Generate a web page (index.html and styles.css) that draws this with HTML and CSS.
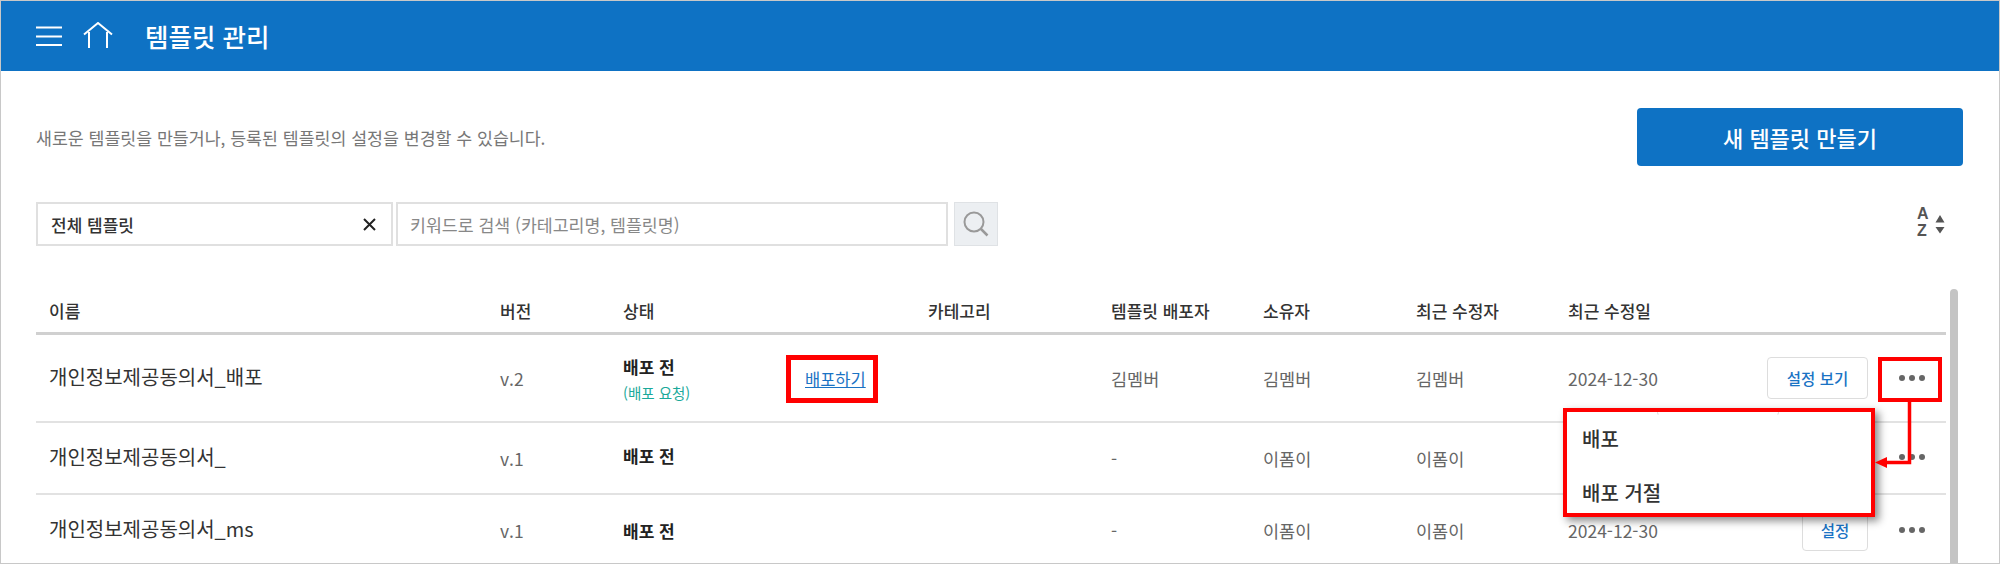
FILE: index.html
```html
<!DOCTYPE html>
<html lang="ko">
<head>
    <meta charset="UTF-8">
    <title>템플릿 관리</title>
    <link rel="stylesheet" href="styles.css">
</head>
<body>
    <div class="page">
        <header class="topbar">
            <svg class="icon-menu" width="26" height="20" viewBox="0 0 26 20">
                <path d="M0 1.500H26M0 10.500H26M0 19H26" fill="none" stroke="#fff" stroke-width="2"/>
            </svg>
            <svg class="icon-home" width="30" height="26" viewBox="0 0 30 26">
                <path d="M1 12.500L15 1L29 12.500M6 10V26M24 10V26" fill="none" stroke="#fff" stroke-width="2"/>
            </svg>
            <h1>템플릿 관리</h1>
        </header>

        <div class="content">
            <div class="intro">
                <p>새로운 템플릿을 만들거나, 등록된 템플릿의 설정을 변경할 수 있습니다.</p>
                <button class="btn-new" type="button">새 템플릿 만들기</button>
            </div>

            <div class="filters">
                <div class="select">
                    <span>전체 템플릿</span>
                    <svg width="13" height="13" viewBox="0 0 13 13">
                        <path d="M1 1L12 12M12 1L1 12" fill="none" stroke="#222" stroke-width="2"/>
                    </svg>
                </div>
                <div class="search">키워드로 검색 (카테고리명, 템플릿명)</div>
                <button class="btn-search" type="button">
                    <svg width="26" height="26" viewBox="0 0 26 26">
                        <circle cx="11" cy="11" r="9.500" fill="none" stroke="#999" stroke-width="2"/>
                        <path d="M18 18L24.500 24.500" fill="none" stroke="#999" stroke-width="2.500"/>
                    </svg>
                </button>
                <div class="sort">
                    <div class="sort-letters"><span>A</span><span>Z</span></div>
                    <svg width="10" height="19" viewBox="0 0 10 19">
                        <path d="M5 0L9.500 7.500H0.500ZM0.500 12H9.500L5 18.500Z" fill="#555"/>
                    </svg>
                </div>
            </div>

            <div class="list">
                <div class="table">
                    <div class="row row-head">
                        <div>이름</div>
                        <div>버전</div>
                        <div>상태</div>
                        <div></div>
                        <div>카테고리</div>
                        <div>템플릿 배포자</div>
                        <div>소유자</div>
                        <div>최근 수정자</div>
                        <div>최근 수정일</div>
                        <div></div>
                    </div>

                    <div class="row row-1">
                        <div class="name">개인정보제공동의서_배포</div>
                        <div class="cell">v.2</div>
                        <div class="status"><strong>배포 전</strong><span>(배포 요청)</span></div>
                        <div><a class="deploy" href="#">배포하기</a></div>
                        <div></div>
                        <div class="cell">김멤버</div>
                        <div class="cell">김멤버</div>
                        <div class="cell">김멤버</div>
                        <div class="cell">2024-12-30</div>
                        <div class="actions">
                            <button class="btn-line" type="button">설정 보기</button>
                            <span class="dots"><i></i><i></i><i></i></span>
                        </div>
                    </div>

                    <div class="row row-2">
                        <div class="name">개인정보제공동의서_</div>
                        <div class="cell">v.1</div>
                        <div class="status"><strong>배포 전</strong></div>
                        <div></div>
                        <div></div>
                        <div class="cell dash">-</div>
                        <div class="cell">이폼이</div>
                        <div class="cell">이폼이</div>
                        <div class="cell"></div>
                        <div class="actions">
                            <span class="dots"><i></i><i></i><i></i></span>
                        </div>
                    </div>

                    <div class="row row-3">
                        <div class="name">개인정보제공동의서_ms</div>
                        <div class="cell">v.1</div>
                        <div class="status"><strong>배포 전</strong></div>
                        <div></div>
                        <div></div>
                        <div class="cell dash">-</div>
                        <div class="cell">이폼이</div>
                        <div class="cell">이폼이</div>
                        <div class="cell">2024-12-30</div>
                        <div class="actions">
                            <button class="btn-line btn-short" type="button">설정</button>
                            <span class="dots"><i></i><i></i><i></i></span>
                        </div>
                    </div>
                </div>
                <div class="scrollbar"></div>
            </div>
        </div>

        <!-- annotations over the screenshot -->
        <div class="mark mark-deploy"></div>
        <div class="mark mark-dots"></div>
        <div class="menu">
            <div>배포</div>
            <div>배포 거절</div>
        </div>
        <svg class="arrow" width="40" height="68" viewBox="0 0 40 68">
            <path d="M34.500 0V60.500H8" fill="none" stroke="#f00" stroke-width="3.500"/>
            <path d="M0 60.500L12 55V66Z" fill="#f00"/>
        </svg>
    </div>
</body>
</html>
```

FILE: styles.css
```css
* {
    box-sizing: border-box;
}
html, body {
    margin: 0;
    height: 100%;
    overflow: hidden;
}
body {
    font-family: "Noto Sans CJK KR", "Noto Sans", sans-serif;
    color: #333;
    background: #fff;
}
.page {
    position: relative;
    height: 564px;
    border: 1px solid #c8c8c8;
    overflow: hidden;
}

.topbar {
    display: flex;
    align-items: center;
    height: 70px;
    padding-left: 35px;
    background-color: #0e72c4;
    color: #fff;
}
.icon-menu {
    margin-right: 21px;
}
.icon-home {
    margin-top: -2px;
    margin-right: 32px;
}
.topbar h1 {
    margin: 0;
    font-size: 25.500px;
    font-weight: 500;
    line-height: 1;
}

.content {
    padding-left: 35px;
}
.intro {
    display: flex;
    align-items: center;
    justify-content: space-between;
    height: 58px;
    margin-top: 37px;
    padding-right: 36px;
}
.intro p {
    margin: 0;
    font-size: 17.300px;
    color: #777;
}
.btn-new {
    width: 326px;
    height: 58px;
    border: none;
    border-radius: 4px;
    background-color: #0e72c4;
    color: #fff;
    font-family: inherit;
    font-size: 22px;
    font-weight: 500;
}

.filters {
    display: flex;
    margin-top: 36px;
    height: 44px;
}
.select {
    display: flex;
    align-items: center;
    justify-content: space-between;
    width: 357px;
    padding: 0 15px 0 13px;
    border: 2px solid #e0e0e0;
    font-size: 17px;
    font-weight: 500;
    color: #333;
}
.search {
    display: flex;
    align-items: center;
    width: 552px;
    margin-left: 3px;
    padding-left: 12px;
    border: 2px solid #e0e0e0;
    font-size: 17.300px;
    color: #888;
}
.btn-search {
    display: flex;
    align-items: center;
    justify-content: center;
    width: 44px;
    margin-left: 6px;
    padding: 0;
    border: 1px solid #dfe2e5;
    background-color: #eceff2;
}
.sort {
    display: flex;
    align-items: center;
    gap: 6px;
    margin-left: 919px;
}
.sort-letters {
    display: flex;
    flex-direction: column;
    margin-top: -4px;
    font-family: "Liberation Sans", sans-serif;
    font-size: 16px;
    font-weight: 700;
    line-height: 17px;
    color: #555;
}

.list {
    display: flex;
    margin-top: 43px;
}
.table {
    width: 1910px;
}
.row {
    display: grid;
    grid-template-columns: 451px 123px 182px 123px 183px 152px 153px 152px 150px 1fr;
    align-items: center;
    padding-left: 13px;
    border-bottom: 2px solid #e2e2e2;
    font-size: 17px;
}
.row-head {
    height: 46px;
    border-bottom: 3px solid #d0d0d0;
    font-weight: 500;
    color: #333;
}
.row-1 {
    height: 88px;
}
.row-2 {
    height: 72px;
}
.row-3 {
    height: 70px;
    border-bottom: none;
}
.name {
    margin-bottom: 4px;
    font-size: 20px;
    color: #333;
}
.cell {
    font-size: 17.500px;
    color: #666;
}
.status {
    display: flex;
    flex-direction: column;
    gap: 3px;
}
.row-2 .status {
    margin-bottom: 6px;
}
.status strong {
    font-size: 17px;
    font-weight: 700;
    color: #222;
}
.status span {
    font-size: 14.500px;
    color: #1aa99a;
}
.deploy {
    font-size: 16.500px;
    color: #1a73c4;
}
.actions {
    display: flex;
    align-items: center;
    justify-content: flex-end;
}
.btn-line {
    width: 101px;
    height: 42px;
    border: 1px solid #ddd;
    border-radius: 4px;
    background: #fff;
    color: #1a73c4;
    font-family: inherit;
    font-size: 15.500px;
    font-weight: 500;
}
.btn-short {
    width: 66px;
}
.dots {
    display: flex;
    justify-content: center;
    gap: 4px;
    width: 78px;
    padding-left: 10px;
}
.dots i {
    width: 6px;
    height: 6px;
    border-radius: 50%;
    background-color: #666;
}
.row-2 .dots {
    margin-bottom: 2px;
}
.scrollbar {
    width: 8px;
    margin-left: 4px;
    background-color: #c4c4c4;
    border-radius: 4px 4px 0 0;
}

.mark {
    position: absolute;
    border: 5px solid #f00;
}
.mark-deploy {
    left: 785px;
    top: 354px;
    width: 92px;
    height: 48px;
}
.mark-dots {
    left: 1877px;
    top: 356px;
    width: 64px;
    height: 45px;
    border-width: 4px;
}
.menu {
    position: absolute;
    left: 1562px;
    top: 407px;
    width: 312px;
    height: 109px;
    padding-left: 15px;
    border: 4px solid #f00;
    background: #fff;
    box-shadow: 4px 4px 8px rgba(0, 0, 0, 0.45);
    font-size: 20px;
    font-weight: 500;
    line-height: 54px;
    color: #333;
}
/* bottom corners of the row 2 button that stick out under the menu's top edge */
.menu::before {
    content: "";
    position: absolute;
    left: 90px;
    top: 0;
    width: 120px;
    height: 3px;
    border: 1px solid #ddd;
    border-top: none;
    border-radius: 0 0 4px 4px;
    border-bottom-color: transparent;
}
.arrow {
    position: absolute;
    left: 1874px;
    top: 401px;
}
```
